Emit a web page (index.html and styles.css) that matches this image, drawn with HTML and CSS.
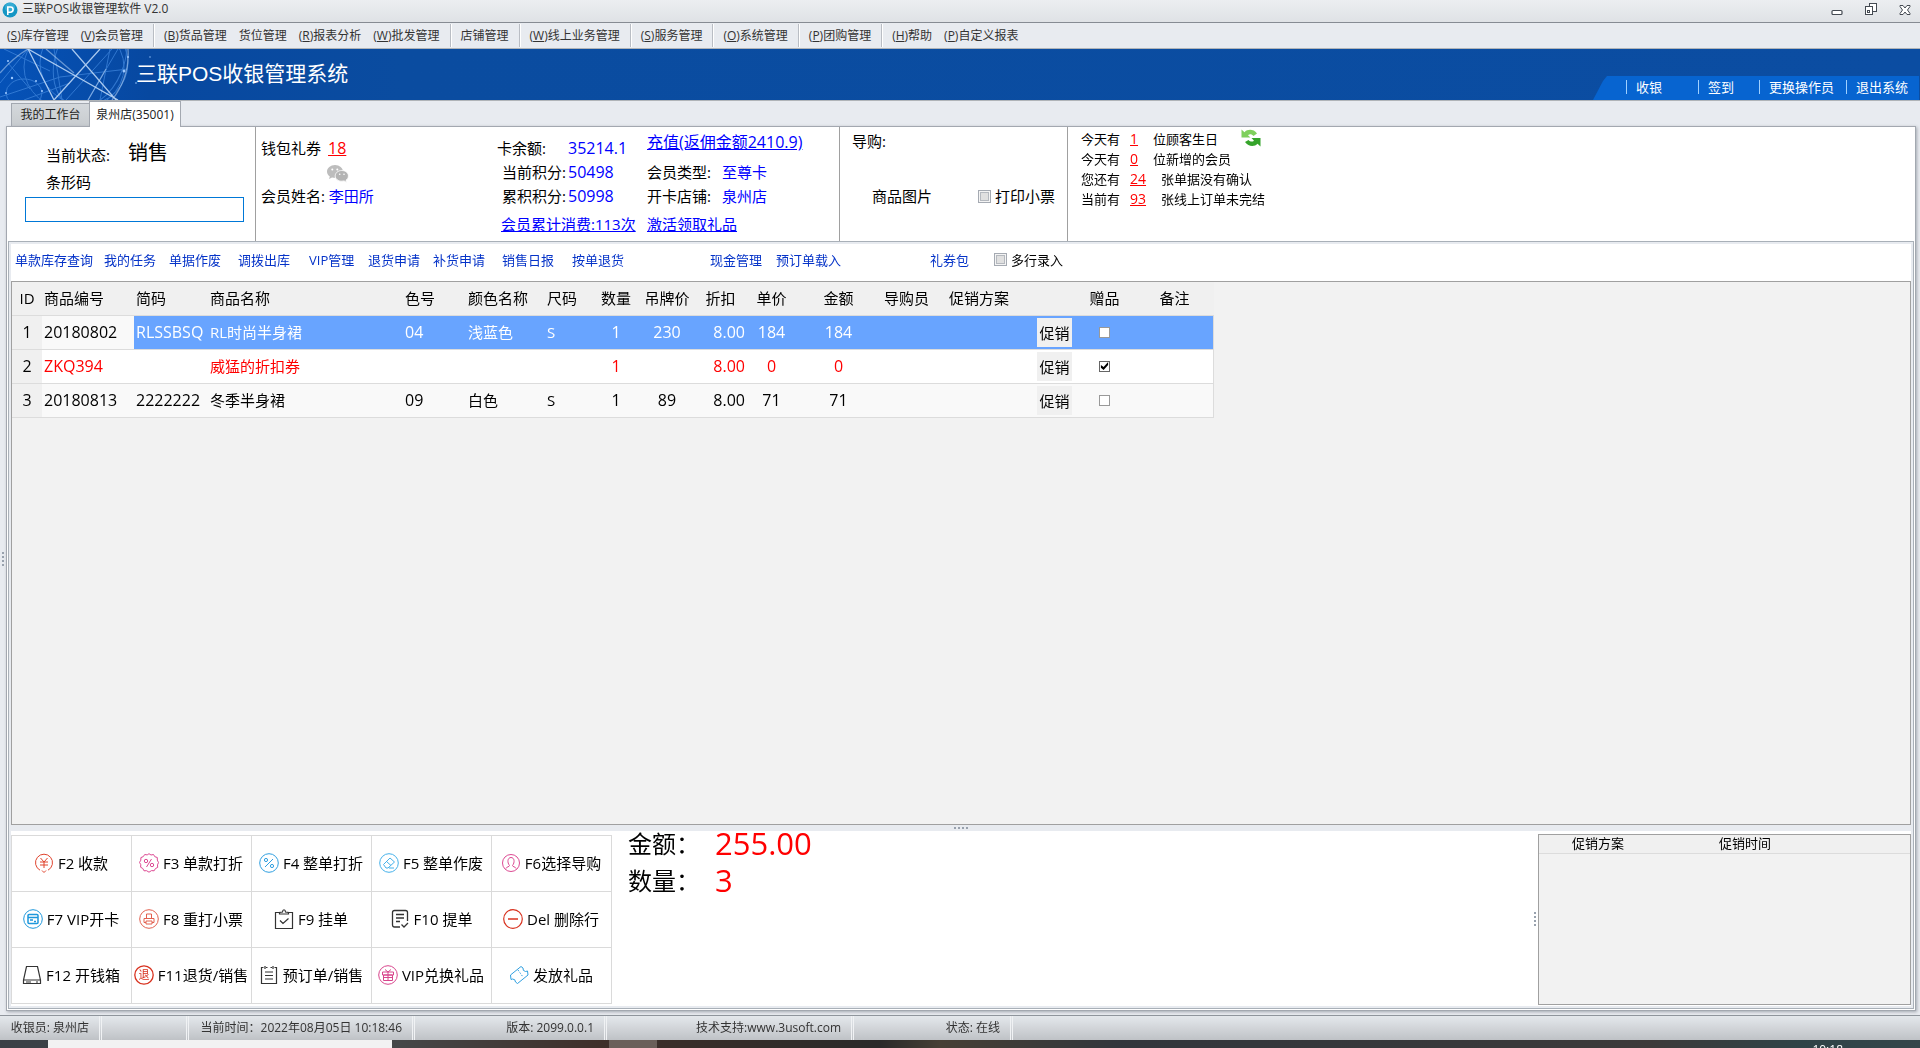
FILE: index.html
```html
<!DOCTYPE html>
<html lang="zh-CN">
<head>
    <meta charset="UTF-8">
    <title>三联POS收银管理软件 V2.0</title>
    <link rel="stylesheet" href="styles.css">
</head>
<body>
<header class="titlebar">
    <svg class="app-icon" width="16" height="16" viewBox="0 0 16 16">
        <circle cx="8" cy="8" r="7.5" fill="#1496c4"/>
        <circle cx="8" cy="5.5" r="5" fill="#4dbbe0" opacity=".6"/>
        <path d="M5.8 13V5h2.7a2.6 2.6 0 0 1 0 5.2H6" fill="none" stroke="#fff" stroke-width="1.6"/>
    </svg>
    <span class="app-title">三联POS收银管理软件 V2.0</span>
    <button class="win-btn" aria-label="最小化">
        <svg width="12" height="14" viewBox="0 0 12 14"><rect x="1" y="8.5" width="10" height="4" rx="1" fill="#fff" stroke="#444a52" stroke-width="1.2"/></svg>
    </button>
    <button class="win-btn" aria-label="还原">
        <svg width="12" height="14" viewBox="0 0 12 14" fill="#fff" stroke="#444a52"><rect x="4.500" y="1.500" width="7" height="8"/><rect x=".5" y="4.500" width="7" height="8"/><rect x="2.500" y="8.500" width="2" height="2"/></svg>
    </button>
    <button class="win-btn" aria-label="关闭">
        <svg width="12" height="14" viewBox="0 0 12 14"><path d="M1 3.500h3l2 2.500 2-2.500h3v1L8.500 8l2.500 3.500v1H8L6 10l-2 2.500H1v-1L3.500 8 1 4.500z" fill="#fff" stroke="#444a52"/></svg>
    </button>
</header>

<nav class="menubar">
    <a href="#">(<u>S</u>)库存管理</a>
    <a href="#">(<u>V</u>)会员管理</a>
    <span class="sep"></span>
    <a href="#">(<u>B</u>)货品管理</a>
    <a href="#">货位管理</a>
    <a href="#">(<u>R</u>)报表分析</a>
    <a href="#">(<u>W</u>)批发管理</a>
    <span class="sep"></span>
    <a href="#">店铺管理</a>
    <span class="sep"></span>
    <a href="#">(<u>W</u>)线上业务管理</a>
    <span class="sep"></span>
    <a href="#">(<u>S</u>)服务管理</a>
    <span class="sep"></span>
    <a href="#">(<u>O</u>)系统管理</a>
    <span class="sep"></span>
    <a href="#">(<u>P</u>)团购管理</a>
    <span class="sep"></span>
    <a href="#">(<u>H</u>)帮助</a>
    <a href="#">(<u>P</u>)自定义报表</a>
</nav>

<div class="banner">
    <svg class="banner-art" width="200" height="51" viewBox="0 0 200 51" fill="none">
        <g stroke="#3f86dd" stroke-width="1" opacity=".75">
            <ellipse cx="74" cy="18" rx="50" ry="44"/>
            <ellipse cx="84" cy="14" rx="44" ry="42"/>
            <ellipse cx="90" cy="10" rx="34" ry="50" transform="rotate(22 90 10)"/>
            <ellipse cx="24" cy="44" rx="18" ry="14"/>
            <path d="M0 34L28 0M0 48L60 28 128 20M66 51L112 0M88 51L118 0M4 0L50 22M54 0L62 51M24 51L70 34M8 14L30 40M110 0L100 51"/>
        </g>
        <g stroke="#c6defa" stroke-width="1.300">
            <path d="M28 0L54 51M28 0L118 51M72 0L116 51M100 0L54 51" opacity=".85"/>
            <path d="M46 0L74 24M0 24Q14 8 28 0M128 0Q130 28 112 51M88 51L106 20" opacity=".5"/>
        </g>
        <g fill="#9cc8ff">
            <circle cx="12" cy="29" r="1.200"/><circle cx="8" cy="12" r="1"/><circle cx="36" cy="32" r="1"/><circle cx="124" cy="22" r="1.500"/>
            <circle cx="128" cy="8" r="1"/><circle cx="42" cy="42" r="1"/><circle cx="6" cy="44" r="1"/><circle cx="150" cy="8" r="1" opacity=".5"/><circle cx="136" cy="34" r="1" opacity=".6"/>
        </g>
    </svg>
    <h1>三联POS收银管理系统</h1>
    <div class="banner-menu">
        <a href="#">收银</a>
        <a href="#">签到</a>
        <a href="#">更换操作员</a>
        <a href="#">退出系统</a>
    </div>
</div>

<div class="tabs">
    <button class="tab">我的工作台</button>
    <button class="tab active">泉州店(35001)</button>
</div>

<main class="panel">
    <span class="grip-left"></span>
    <section class="info">
        <div class="barcode">
            <div class="state"><span>当前状态:</span><b>销售</b></div>
            <label for="barcode">条形码</label>
            <input id="barcode" type="text" autofocus>
        </div>
        <div class="member">
            <div class="wallet">
                <div>钱包礼券<a href="#" class="red">18</a></div>
                <div class="wechat">
                    <svg width="22" height="18" viewBox="0 0 22 18">
                        <path d="M8 0C3.500 0 0 3 0 6.500c0 2 1 3.700 2.800 5L2 14l3-1.600c1 .3 2 .4 3 .4 4.500 0 8-2.800 8-6.300S12.500 0 8 0z" fill="#bdbdbd"/>
                        <path d="M14.800 5.500c-3.800 0-6.600 2.500-6.600 5.400s2.800 5.300 6.600 5.300c.8 0 1.600-.1 2.300-.3l2.500 1.500-.6-2.200c1.500-1 2.400-2.600 2.400-4.300 0-2.900-2.800-5.400-6.600-5.400z" fill="#b4b4b4" stroke="#fff" stroke-width=".8"/>
                        <g fill="#fff"><circle cx="5.300" cy="4.600" r="1"/><circle cx="10.300" cy="4.600" r="1"/><circle cx="12.700" cy="9.200" r=".8"/><circle cx="17" cy="9.200" r=".8"/></g>
                    </svg>
                </div>
                <div>会员姓名: <span class="blue">李田所</span></div>
            </div>
            <div class="points">
                <span class="left">卡余额:</span><span class="val">35214.1</span>
                <span>当前积分:</span><span class="val">50498</span>
                <span>累积积分:</span><span class="val">50998</span>
                <a href="#" class="wide">会员累计消费:113次</a>
            </div>
            <div class="card">
                <a href="#" class="recharge">充值(返佣金额2410.9)</a>
                <span>会员类型:</span><span class="blue">至尊卡</span>
                <span>开卡店铺:</span><span class="blue">泉州店</span>
                <a href="#" class="wide">激活领取礼品</a>
            </div>
        </div>
        <div class="guide">
            <div>导购:</div>
            <div class="guide-row">
                <span>商品图片</span>
                <label class="flat-check"><input type="checkbox">打印小票</label>
            </div>
        </div>
        <div class="notices">
            <div>今天有<a href="#">1</a>位顾客生日
                <svg class="refresh" width="20" height="18" viewBox="0 0 20 18">
                    <path d="M.5.500l3 2.700C6.500 0 12.500-.3 16 4.500l-3.500 2.500c-1.800-2.200-4-2.400-5.500-.8L9.500 8.500H.5z" fill="#7fd05c"/>
                    <path d="M19.500 17.500L16.500 14.800C13.500 18 7.500 18 4 13l3.500-2c1.800 2 4 2 5.500.7L10.500 9h9z" fill="#35a42a"/>
                </svg>
            </div>
            <div>今天有<a href="#">0</a>位新增的会员</div>
            <div>您还有<a href="#">24</a>张单据没有确认</div>
            <div>当前有<a href="#">93</a>张线上订单未完结</div>
        </div>
    </section>

    <div class="work">
        <nav class="toolbar">
            <a href="#">单款库存查询</a>
            <a href="#">我的任务</a>
            <a href="#">单据作废</a>
            <a href="#">调拨出库</a>
            <a href="#">VIP管理</a>
            <a href="#">退货申请</a>
            <a href="#">补货申请</a>
            <a href="#">销售日报</a>
            <a href="#">按单退货</a>
            <a href="#">现金管理</a>
            <a href="#">预订单载入</a>
            <a href="#">礼券包</a>
            <label class="flat-check"><input type="checkbox">多行录入</label>
        </nav>

        <div class="goods-box">
            <table class="goods">
                <colgroup>
                    <col class="w30"><col class="w92"><col class="w74"><col class="w195"><col class="w63"><col class="w79"><col class="w46"><col class="w50"><col class="w52">
                    <col class="w55"><col class="w47"><col class="w87"><col class="w65"><col class="w90"><col class="w37"><col class="w61"><col class="w79">
                </colgroup>
                <thead>
                <tr>
                    <th class="c">ID</th><th>商品编号</th><th>简码</th><th>商品名称</th><th>色号</th><th>颜色名称</th><th>尺码</th>
                    <th class="c">数量</th><th class="c">吊牌价</th><th class="c">折扣</th><th class="c">单价</th><th class="c">金额</th>
                    <th>导购员</th><th>促销方案</th><th></th><th class="c">赠品</th><th class="c">备注</th>
                </tr>
                </thead>
                <tbody>
                <tr class="selected">
                    <td class="id">1</td><td class="code">20180802</td><td>RLSSBSQ</td><td class="name">RL时尚半身裙</td><td>04</td><td class="name">浅蓝色</td><td class="name">S</td>
                    <td class="c">1</td><td class="c">230</td><td class="r">8.00</td><td class="c">184</td><td class="c">184</td>
                    <td></td><td></td><td class="btn-cell"><button>促销</button></td><td class="c"><input type="checkbox" aria-label="赠品"></td><td></td>
                </tr>
                <tr class="gift">
                    <td class="id">2</td><td class="code">ZKQ394</td><td></td><td class="name">威猛的折扣券</td><td></td><td></td><td></td>
                    <td class="c">1</td><td></td><td class="r">8.00</td><td class="c">0</td><td class="c">0</td>
                    <td></td><td></td><td class="btn-cell"><button>促销</button></td><td class="c"><input type="checkbox" aria-label="赠品" checked></td><td></td>
                </tr>
                <tr class="odd">
                    <td class="id">3</td><td class="code">20180813</td><td>2222222</td><td class="name">冬季半身裙</td><td>09</td><td class="name">白色</td><td class="name">S</td>
                    <td class="c">1</td><td class="c">89</td><td class="r">8.00</td><td class="c">71</td><td class="c">71</td>
                    <td></td><td></td><td class="btn-cell"><button>促销</button></td><td class="c"><input type="checkbox" aria-label="赠品"></td><td></td>
                </tr>
                </tbody>
            </table>
        </div>

        <div class="splitter"><i></i><i></i><i></i><i></i></div>

        <section class="bottom">
            <div class="keys">
                <button>
                    <svg viewBox="0 0 20 20" stroke="#e0442e"><path d="M6 17.200A8.500 8.500 0 1 1 14 17.200M8 17.500l2 2 2-2M6.500 5L10 9l3.500-4M10 9v6M6 9h8M6 12h8"/></svg>
                    F2 收款
                </button>
                <button>
                    <svg viewBox="0 0 20 20" stroke="#dd4a93"><path d="M10 .7l2 1.300 2.500-.5 1.300 2.200 2.500.8v2.600L19.500 9.500l-1 2.400.2 2.500-2.300 1.200-1.300 2.200-2.600-.2L10 19.200l-2.400-1.500-2.600.1-1.200-2.300-2.200-1.300.2-2.500L.5 9.400l1.300-2.200.1-2.600 2.400-1L5.700 1.500l2.500.4z"/><path d="M12.500 6l-5 8"/><circle cx="7" cy="8" r="1.700"/><circle cx="13" cy="12" r="1.700"/></svg>
                    F3 单款打折
                </button>
                <button>
                    <svg viewBox="0 0 20 20" stroke="#2f9fe0"><circle cx="10" cy="10" r="9.300"/><path d="M14 6l-8 8"/><circle cx="7" cy="7" r="1.600"/><circle cx="13" cy="13" r="1.600"/></svg>
                    F4 整单打折
                </button>
                <button>
                    <svg viewBox="0 0 20 20" stroke="#45b1ea"><circle cx="10" cy="10" r="9.300"/><path d="M4.500 11.500L11 5l4.500 4L9 15H7zM7.500 8.500l4.500 4M10 15h5"/></svg>
                    F5 整单作废
                </button>
                <button>
                    <svg viewBox="0 0 20 20" stroke="#dd4a93"><circle cx="10" cy="10" r="8.500"/><path d="M5 15.500c.5-2 3.500-1.500 3.500-3C6 9.500 6.500 4.500 10 4.500s4 5 1.500 8c0 1.500 3 1 3.500 3"/></svg>
                    F6选择导购
                </button>
                <button>
                    <svg viewBox="0 0 20 20" stroke="#1d97db"><circle cx="10" cy="10" r="9.300"/><rect x="5" y="5.500" width="10" height="9" rx="1" stroke-width="1.500"/><path d="M5 8.500h10M7 11h3M11 12.500h2" stroke-width="1.500"/></svg>
                    F7 VIP开卡
                </button>
                <button>
                    <svg viewBox="0 0 20 20" stroke="#e2604f"><circle cx="10" cy="10" r="9.300"/><path d="M7.500 9.500V5h5v4.500M7 13.500H5V9.500h10v4h-2M7 12h6v3H7z"/></svg>
                    F8 重打小票
                </button>
                <button>
                    <svg viewBox="0 0 20 20" stroke="#333"><path d="M5.500 3.500H1.500v16h17v-16h-4M5.500 5V3.500l3-.5C8.700 0 11.300 0 11.500 3l3 .5V5zM6 11.500l3 3 5.500-5" stroke-width="1.200"/></svg>
                    F9 挂单
                </button>
                <button>
                    <svg viewBox="0 0 20 20" stroke="#333"><path d="M10 18H4.500Q2.500 18 2.500 16V3.500q0-2 2-2h11q2 0 2 2V12M6 5.500h8M6 9h8M6 12.500h4M11.500 15.500l2.500 2.500 4-4" stroke-width="1.300"/></svg>
                    F10 提单
                </button>
                <button>
                    <svg viewBox="0 0 20 20" stroke="#d8321f"><circle cx="10" cy="10" r="9.300" stroke-width="1.200"/><path d="M5 10h10" stroke-width="1.500"/></svg>
                    Del 删除行
                </button>
                <button>
                    <svg viewBox="0 0 20 20" stroke="#333"><path d="M4.500 1.500h11L18.500 15v3.500h-17V15zM1.500 15h17M4 17h5M14 17h2" stroke-width="1.200"/></svg>
                    F12 开钱箱
                </button>
                <button>
                    <svg viewBox="0 0 20 20" stroke="#d8321f"><circle cx="10" cy="10" r="9.200" stroke-width="1.300"/><text x="10" y="14" text-anchor="middle" font-size="11" fill="#d8321f" stroke="none">退</text></svg>
                    F11退货/销售
                </button>
                <button>
                    <svg viewBox="0 0 20 20" stroke="#333"><path d="M4.500 2.500h-2v16h15v-16h-2M7 2.500h1.500M11.500 2.500H13M6 1v3M14 1v3M6 7h8M6 10.500h8M6 14h8" stroke-width="1.200"/></svg>
                    预订单/销售
                </button>
                <button>
                    <svg viewBox="0 0 20 20" stroke="#d8458c"><circle cx="10" cy="10" r="9.300"/><path d="M4.500 7h11v3h-11zM5.500 10h9v5.500h-9zM10 7v8.500M10 7L7 4.500M10 7l3-2.500M5.500 12.500h9"/></svg>
                    VIP兑换礼品
                </button>
                <button>
                    <svg viewBox="0 0 20 20" stroke="#2f9fe0"><path d="M1.500 10L12 1.500l2 1.500q-.5 3 2.500 3.500l2-.5.500 4L8.500 18.500l-2-1.500q0-3-3-3l-1.500.5z"/><path d="M9 5l5 7" stroke-dasharray="1.500 1.500"/></svg>
                    发放礼品
                </button>
            </div>
            <div class="totals">
                <span>金额：</span><strong>255.00</strong>
                <span>数量：</span><strong>3</strong>
            </div>
            <div class="grip"><i></i><i></i><i></i><i></i></div>
            <div class="promo">
                <table>
                    <thead><tr><th>促销方案</th><th>促销时间</th></tr></thead>
                </table>
            </div>
        </section>
    </div>
</main>

<footer class="statusbar">
    <span class="s1">收银员: 泉州店</span>
    <span class="s2"></span>
    <span class="s3">当前时间：2022年08月05日 10:18:46</span>
    <span class="s4">版本: 2099.0.0.1</span>
    <span class="s5">技术支持:www.3usoft.com</span>
    <span class="s6">状态: 在线</span>
</footer>
<div class="taskbar">
    <span class="task-light"></span>
    <span class="task-active"></span>
    <time>10:18</time>
</div>
</body>
</html>
```
FILE: styles.css
```css
* {
    box-sizing: border-box;
}

body {
    margin: 0;
    height: 100vh;
    display: flex;
    flex-direction: column;
    overflow: hidden;
    background: #e8ebf0;
    color: #000;
    font-family: "Open Sans", "Noto Sans CJK SC", sans-serif;
    font-size: 15px;
    line-height: 24px;
    white-space: nowrap;
}

button, input {
    font: inherit;
    color: inherit;
}

a {
    color: #0000ff;
}

/* window title */
.titlebar {
    display: flex;
    align-items: center;
    height: 23px;
    flex: none;
    padding: 0 9px 0 2px;
    background: linear-gradient(#eceef1, #dfe2e6);
    border-bottom: 1px solid #868b93;
    color: #333;
    font-size: 12px;
}

.app-title {
    margin: 0 auto 4px 4px;
    line-height: 16px;
}

.app-icon {
    margin-top: -2px;
}

.win-btn {
    display: flex;
    margin: -5px 0 0 22px;
    padding: 0;
    border: 0;
    background: none;
}

/* main menu */
.menubar {
    display: flex;
    height: 26px;
    flex: none;
    padding: 1px;
    border-bottom: 1px solid #b0b4b8;
    font-size: 12px;
}

.menubar a {
    padding: 0 6px;
    color: #333;
    text-decoration: none;
}

.sep {
    width: 2px;
    margin: 0 3px 0 4px;
    border-left: 1px solid #b9bdc4;
    background: #fff;
}

/* blue banner */
.banner {
    position: relative;
    display: flex;
    justify-content: space-between;
    height: 52px;
    flex: none;
    padding: 0 1px;
    background: linear-gradient(90deg, #0552b8 0, #0748a0 150px, #0a4ca0 400px, #0b4da2 100%);
    border-bottom: 1px solid #b0b4b8;
}

.banner-art {
    position: absolute;
    left: 0;
    top: 0;
}

.banner h1 {
    margin: 0 0 0 135px;
    color: #fff;
    font: 21px/50px "Liberation Sans", "Noto Sans CJK SC", sans-serif;
}

.banner-menu {
    align-self: flex-end;
    display: flex;
    height: 24px;
    padding: 0 11px 2px 33px;
    background: #0764d0;
    clip-path: polygon(14px 0, 100% 0, 100% 100%, 0 100%, 10px 5px);
    font-size: 13px;
    line-height: 20px;
}

.banner-menu a {
    display: flex;
    align-items: center;
    color: #fff;
    text-decoration: none;
}

.banner-menu a::before {
    content: "";
    width: 1px;
    height: 14px;
    margin: 0 9px 0 12px;
    background: #9fd0ff;
}

.banner-menu a:first-child::before {
    margin-left: 0;
}

.banner-menu a:first-child {
    width: 61px;
}

.banner-menu a:nth-child(2) {
    width: 60px;
}

.banner-menu a:first-child + a::before {
    margin-left: 11px;
}

/* tabs */
.tabs {
    display: flex;
    align-items: flex-end;
    height: 25px;
    flex: none;
    padding-left: 11px;
    font-size: 12px;
    color: #222;
}

.tab {
    width: 78px;
    height: 23px;
    padding: 0;
    border: 1px solid #a3a8b0;
    border-width: 1px 0 0 1px;
    background: linear-gradient(#d4d8dc, #c8cccf);
    line-height: 22px;
}

.tab.active {
    z-index: 1;
    width: 92px;
    height: 26px;
    margin-bottom: -1px;
    border-right-width: 1px;
    background: #fff;
}

.panel {
    flex: 1;
    min-height: 0;
    display: flex;
    flex-direction: column;
    margin: 0 4px 0 6px;
    padding: 0 1px 1px;
    border: 1px solid #a3a8b0;
    box-shadow: 1px 1px 3px #a3a8b0;
    background: #fff;
}

.grip-left {
    position: absolute;
    left: 2px;
    top: 552px;
    width: 2px;
    height: 14px;
    background: repeating-linear-gradient(#98a1ad 0 2px, transparent 2px 4px);
}

/* member information */
.info {
    display: grid;
    grid-template-columns: 248px 584px 228px 1fr;
    height: 114px;
    flex: none;
}

.info > div {
    border-right: 1px solid #a0a0a0;
}

.info > div:last-child {
    border-right: 0;
}

.barcode {
    display: flex;
    flex-direction: column;
    padding: 13px 11px 0 17px;
}

.state {
    display: flex;
    align-items: center;
    gap: 18px;
    height: 30px;
    padding-left: 21px;
}

.state b {
    margin-bottom: 4px;
    font-size: 20px;
    font-weight: normal;
}

.barcode label {
    padding-left: 21px;
}

.barcode input {
    height: 25px;
    margin-top: 3px;
    padding: 0 1px;
    border: 1px solid #0078d7;
    outline: 0;
}

.member {
    display: grid;
    grid-template-columns: 241px 150px 1fr;
}

.wallet {
    padding: 9px 0 0 5px;
}

.wallet .red {
    margin-left: 7px;
    color: #f00;
    font-size: 16px;
}

.wallet > div {
    height: 24px;
}

.wechat {
    padding: 5px 0 0 66px;
    line-height: 0;
}

.blue, .val {
    color: #0000ff;
}

.points {
    display: grid;
    grid-template-columns: 69px 1fr;
    grid-template-rows: 24px 24px 24px 32px;
    column-gap: 2px;
    padding-top: 9px;
    text-align: right;
}

.points .left, .points .val {
    text-align: left;
}

.points .val {
    font-size: 16px;
}

.wide {
    grid-column: 1 / -1;
    line-height: 32px;
    text-align: left;
}

.points .wide {
    padding-left: 4px;
}

.card {
    display: grid;
    grid-template-columns: 75px 1fr;
    grid-template-rows: 33px 24px 24px 32px;
}

.recharge {
    grid-column: 1 / -1;
    font-size: 16px;
    line-height: 30px;
}

.guide {
    padding: 2px 12px;
}

.guide-row {
    display: flex;
    justify-content: space-between;
    margin: 31px 0 0 20px;
}

.flat-check {
    display: flex;
    align-items: center;
    gap: 4px;
}

.flat-check input {
    appearance: none;
    width: 13px;
    height: 13px;
    margin: 0;
    border: 1px solid #a5aab2;
    background: #e0e0e0;
    box-shadow: inset 0 0 0 1px #f4f4f4, inset 0 0 0 2px #b5b9bf;
}

.notices {
    padding: 2px 0 0 13px;
    font-size: 13px;
    line-height: 20px;
}

.notices > div {
    display: flex;
    height: 20px;
}

.notices a {
    margin: 0 15px 0 10px;
    color: #f00;
    font-size: 14px;
}

.refresh {
    margin-left: 23px;
}

/* working area */
.work {
    flex: 1;
    min-height: 0;
    display: flex;
    flex-direction: column;
    border: 1px solid #a9b0b8;
    outline: 2px solid #e8ebf0;
    outline-offset: -3px;
    padding: 2px;
}

.toolbar {
    display: grid;
    grid-template-columns: 89px 65px 69px 71px 59px 65px 69px 70px 138px 66px 154px 64px auto;
    justify-content: start;
    align-items: center;
    height: 37px;
    flex: none;
    padding: 0 0 6px 4px;
    font-size: 13px;
}

.toolbar a {
    color: #0533c8;
    text-decoration: none;
}

.goods-box {
    flex: 1;
    min-height: 0;
    overflow: hidden;
    border: 1px solid #a0a0a0;
    background: #f2f2f2;
}

.goods {
    width: 1202px;
    table-layout: fixed;
    border-collapse: separate;
    border-spacing: 0;
}

.goods th, .goods td {
    height: 34px;
    padding: 0 2px 1px;
    border-bottom: 1px solid #dcdcdc;
    text-align: left;
    font-weight: normal;
}

.goods th {
    background: #f0f0f0;
}

.goods td {
    background: #fff;
    font-size: 16px;
}

.goods .name, .goods .btn-cell {
    font-size: 15px;
}

.goods td:last-child {
    border-right: 1px solid #dcdcdc;
}

.goods .odd td {
    background: #f9f9f9;
}

.goods .selected td {
    background: #68a4ff;
    color: #fff;
}

.goods .selected .code {
    background: #f9f9f9;
    color: #000;
}

.goods .gift td {
    color: #f00;
}

.goods tr .id {
    background: #f0f0f0;
    color: #000;
    text-align: center;
}

.goods tbody tr td.id {
    background: #f0f0f0;
    color: #000;
}

.goods .c {
    text-align: center;
}

.goods .r {
    text-align: right;
    padding-right: 3px;
}

.goods td.btn-cell {
    padding: 0 1px 0 0;
}

.goods button {
    display: block;
    width: 35px;
    height: 29px;
    padding: 0;
    border: 0;
    background: #f0f0f0;
    color: #000;
}

.goods input {
    appearance: none;
    display: block;
    width: 11px;
    height: 11px;
    margin: 0 auto;
    border: 1px solid #999;
    background: #fff;
}

.goods input:checked {
    border-color: #666;
}

.goods input:checked::before {
    content: "";
    display: block;
    width: 9px;
    height: 9px;
    background: #000;
    clip-path: polygon(10% 40%, 40% 60%, 90% 5%, 90% 40%, 40% 95%, 10% 70%);
}

.w30 { width: 30px; }
.w37 { width: 37px; }
.w46 { width: 46px; }
.w47 { width: 47px; }
.w50 { width: 50px; }
.w52 { width: 52px; }
.w55 { width: 55px; }
.w61 { width: 61px; }
.w63 { width: 63px; }
.w65 { width: 65px; }
.w74 { width: 74px; }
.w79 { width: 79px; }
.w87 { width: 87px; }
.w90 { width: 90px; }
.w92 { width: 92px; }
.w195 { width: 195px; }

.splitter {
    display: flex;
    justify-content: center;
    align-items: center;
    gap: 2px;
    height: 6px;
    flex: none;
    background: #e8ebf0;
}

.splitter i, .grip i {
    width: 2px;
    height: 2px;
    background: #98a1ad;
}

.bottom {
    display: flex;
    height: 175px;
    flex: none;
}

.keys {
    display: grid;
    grid-template-columns: repeat(5, 120px);
    grid-auto-rows: 56px;
    align-self: start;
    margin-top: 4px;
    border: 1px solid #dadada;
    border-width: 1px 0 0 1px;
}

.keys button {
    display: flex;
    justify-content: center;
    align-items: center;
    gap: 4px;
    padding: 0 1px 2px 0;
    border: 1px solid #dadada;
    border-width: 0 1px 1px 0;
    background: #fff;
}

.keys svg {
    width: 20px;
    height: 20px;
    flex: none;
    fill: none;
}

.totals {
    display: grid;
    grid-template-columns: 87px auto;
    grid-auto-rows: 37px;
    align-content: start;
    margin: -6px auto 0 16px;
    font-size: 24px;
    line-height: 37px;
}

.totals strong {
    color: #f00;
    font-size: 31px;
    font-weight: normal;
}

.grip {
    display: flex;
    flex-direction: column;
    justify-content: center;
    gap: 2px;
    margin-right: 2px;
}

.promo {
    width: 373px;
    margin: 3px 0 1px;
    border: 1px solid #a0a0a0;
    background: #f2f2f2;
}

.promo table {
    width: 100%;
    border-collapse: collapse;
    table-layout: fixed;
    background: #f0f0f0;
    font-size: 13px;
    line-height: 17px;
}

.promo th {
    padding: 0 0 1px 33px;
    border-bottom: 1px solid #dcdcdc;
    font-weight: normal;
    text-align: left;
}

.promo th:first-child {
    width: 147px;
}

/* status bar */
.statusbar {
    display: flex;
    height: 25px;
    flex: none;
    margin-top: 4px;
    border-top: 1px solid #8f959c;
    background: linear-gradient(#e4e8ec, #bfc2c6);
    color: #333;
    font-size: 12px;
}

.statusbar span {
    padding-right: 10px;
    border-right: 3px double #f0f2f4;
    text-align: right;
}

.s1 { width: 102px; }
.s2 { width: 87px; }
.s3 { width: 226px; }
.s4 { width: 192px; }
.s5 { width: 247px; }
.s6 { width: 159px; }

.taskbar {
    display: flex;
    height: 8px;
    flex: none;
    overflow: hidden;
    background: linear-gradient(90deg, #3a4046 0, #454748 400px, #3f2f2a 600px, #2a2a2a 880px, #463f35 940px, #32363c 1120px, #3c3a3a 1650px, #2f4347 1800px, #34464a 100%);
    color: #fff;
    font-size: 12px;
}

.task-light {
    width: 344px;
    margin-left: 48px;
    background: #f2f2f2;
}

.task-active {
    width: 48px;
    margin: 0 auto 0 217px;
    background: #6b5f5a;
}

/* the clock hangs over the lower screen edge */
.taskbar time {
    padding-right: 77px;
    line-height: 20px;
}
```
